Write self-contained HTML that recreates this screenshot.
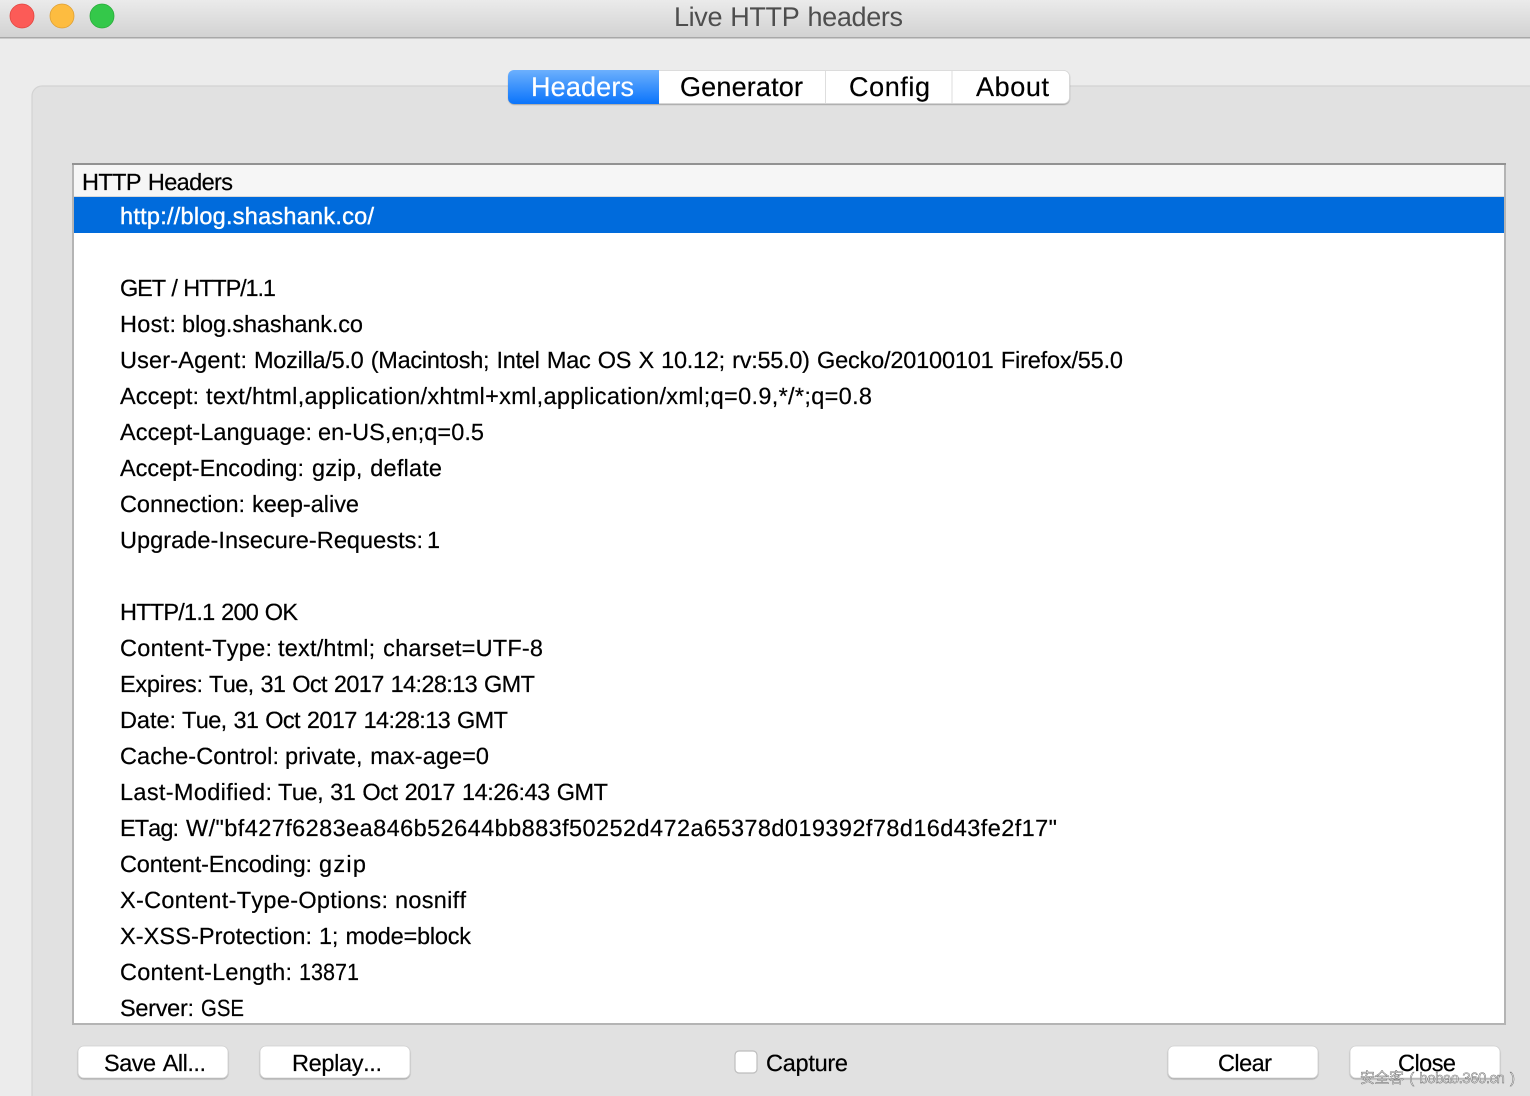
<!DOCTYPE html>
<html lang="en"><head><meta charset="utf-8"><title>Live HTTP headers</title>
<style>
html,body{margin:0;padding:0;width:1530px;height:1096px;overflow:hidden;background:#ececec}
svg{display:block}
text{font-family:"Liberation Sans","Noto Sans CJK SC",sans-serif;font-size:23.5px;fill:#000;stroke:#000;stroke-width:.2px;word-spacing:1px;font-kerning:none;text-rendering:geometricPrecision}
.tab{font-size:27px;word-spacing:0}
</style></head><body>
<svg width="1530" height="1096" viewBox="0 0 1530 1096" xmlns="http://www.w3.org/2000/svg">
<defs>
<linearGradient id="tb" x1="0" y1="0" x2="0" y2="1"><stop offset="0" stop-color="#ebebeb"/><stop offset="1" stop-color="#d2d2d2"/></linearGradient>
<linearGradient id="tab" x1="0" y1="0" x2="0" y2="1"><stop offset="0" stop-color="#6cb0fd"/><stop offset="1" stop-color="#0a74fb"/></linearGradient>
<filter id="sh" x="-5%" y="-20%" width="110%" height="150%"><feDropShadow dx="0" dy="1" stdDeviation="0.6" flood-color="#000" flood-opacity="0.3"/></filter>
</defs>
<rect width="1530" height="1096" fill="#ececec"/>
<rect width="1530" height="37" fill="url(#tb)"/>
<rect y="37" width="1530" height="1.5" fill="#a8a8a8"/>
<circle cx="22" cy="16" r="12" fill="#fc5b57" stroke="#e24640" stroke-width="0.8"/>
<circle cx="62" cy="16" r="12" fill="#fdbc40" stroke="#dfa034" stroke-width="0.8"/>
<circle cx="102" cy="16" r="12" fill="#34c84a" stroke="#2aac3a" stroke-width="0.8"/>
<text x="674" y="26" textLength="229" lengthAdjust="spacing" style="font-size:27px;fill:#4e4e4e;stroke:none">Live HTTP headers</text>

<path d="M32 1096V96a10 10 0 0 1 10-10H1530V1096Z" fill="#e1e1e1"/>
<path d="M32 1096V96a10 10 0 0 1 10-10H1530" fill="none" stroke="#d3d3d3" stroke-width="1.2"/>

<rect x="508.500" y="70.500" width="561" height="33" rx="6" fill="#fff" stroke="#d4d4d4" stroke-width=".8" filter="url(#sh)"/>
<path d="M514 70H659V104H514a6 6 0 0 1-6-6V76a6 6 0 0 1 6-6Z" fill="url(#tab)"/>
<rect x="825" y="71" width="1" height="32" fill="#dedede"/>
<rect x="951.500" y="71" width="1" height="32" fill="#dedede"/>
<text class="tab" x="531" y="96" textLength="103" lengthAdjust="spacing" style="fill:#fff;stroke:#fff">Headers</text>
<text class="tab" x="680" y="96" textLength="123" lengthAdjust="spacing">Generator</text>
<text class="tab" x="849" y="96" textLength="81" lengthAdjust="spacing">Config</text>
<text class="tab" x="976" y="96" textLength="73" lengthAdjust="spacing">About</text>

<rect x="72" y="163" width="1434" height="862" fill="#fff"/>
<rect x="72" y="163" width="1434" height="2" fill="#929292"/>
<rect x="72" y="165" width="2" height="860" fill="#b4b4b4"/>
<rect x="1504" y="165" width="2" height="860" fill="#b4b4b4"/>
<rect x="72" y="1023" width="1434" height="2" fill="#b4b4b4"/>
<rect x="74" y="165" width="1430" height="31" fill="#f6f6f6"/>
<rect x="74" y="196" width="1430" height="1" fill="#d8d8d8"/>
<rect x="74" y="197" width="1430" height="36" fill="#006bdc"/>

<text x="82" y="190" textLength="151" lengthAdjust="spacing">HTTP Headers</text>
<text x="120" y="224" textLength="254" lengthAdjust="spacing" style="fill:#fff;stroke:#fff;stroke-width:.4px">http://blog.shashank.co/</text>
<text x="120" y="296" textLength="156" lengthAdjust="spacing">GET / HTTP/1.1</text>
<text x="120" y="332" textLength="56" lengthAdjust="spacing">Host:</text><text x="182" y="332" textLength="181" lengthAdjust="spacing">blog.shashank.co</text>
<text x="120" y="368" textLength="127" lengthAdjust="spacing">User-Agent:</text><text x="254" y="368" textLength="556" lengthAdjust="spacing">Mozilla/5.0 (Macintosh; Intel Mac OS X 10.12; rv:55.0)</text><text x="817" y="368" textLength="306" lengthAdjust="spacing">Gecko/20100101 Firefox/55.0</text>
<text x="120" y="404" textLength="79" lengthAdjust="spacing">Accept:</text><text x="206" y="404" textLength="666" lengthAdjust="spacing">text/html,application/xhtml+xml,application/xml;q=0.9,*/*;q=0.8</text>
<text x="120" y="440" textLength="192" lengthAdjust="spacing">Accept-Language:</text><text x="318" y="440" textLength="166" lengthAdjust="spacing">en-US,en;q=0.5</text>
<text x="120" y="476" textLength="184" lengthAdjust="spacing">Accept-Encoding:</text><text x="312" y="476" textLength="130" lengthAdjust="spacing">gzip, deflate</text>
<text x="120" y="512" textLength="125" lengthAdjust="spacing">Connection:</text><text x="252" y="512" textLength="107" lengthAdjust="spacing">keep-alive</text>
<text x="120" y="548" textLength="303" lengthAdjust="spacing">Upgrade-Insecure-Requests:</text><text x="427" y="548">1</text>
<text x="120" y="620" textLength="178" lengthAdjust="spacing">HTTP/1.1 200 OK</text>
<text x="120" y="656" textLength="152" lengthAdjust="spacing">Content-Type:</text><text x="278" y="656" textLength="265" lengthAdjust="spacing">text/html; charset=UTF-8</text>
<text x="120" y="692" textLength="83" lengthAdjust="spacing">Expires:</text><text x="209" y="692" textLength="326" lengthAdjust="spacing">Tue, 31 Oct 2017 14:28:13 GMT</text>
<text x="120" y="728" textLength="56" lengthAdjust="spacing">Date:</text><text x="182" y="728" textLength="326" lengthAdjust="spacing">Tue, 31 Oct 2017 14:28:13 GMT</text>
<text x="120" y="764" textLength="159" lengthAdjust="spacing">Cache-Control:</text><text x="285" y="764" textLength="204" lengthAdjust="spacing">private, max-age=0</text>
<text x="120" y="800" textLength="152" lengthAdjust="spacing">Last-Modified:</text><text x="278" y="800" textLength="330" lengthAdjust="spacing">Tue, 31 Oct 2017 14:26:43 GMT</text>
<text x="120" y="836" textLength="59" lengthAdjust="spacing">ETag:</text><text x="186" y="836" textLength="871" lengthAdjust="spacing">W/"bf427f6283ea846b52644bb883f50252d472a65378d019392f78d16d43fe2f17"</text>
<text x="120" y="872" textLength="192" lengthAdjust="spacing">Content-Encoding:</text><text x="319" y="872" textLength="47" lengthAdjust="spacing">gzip</text>
<text x="120" y="908" textLength="268" lengthAdjust="spacing">X-Content-Type-Options:</text><text x="395" y="908" textLength="71" lengthAdjust="spacing">nosniff</text>
<text x="120" y="944" textLength="192" lengthAdjust="spacing">X-XSS-Protection:</text><text x="319" y="944" textLength="152" lengthAdjust="spacing">1; mode=block</text>
<text x="120" y="980" textLength="172" lengthAdjust="spacing">Content-Length:</text><text x="299" y="980" textLength="60" lengthAdjust="spacingAndGlyphs">13871</text>
<text x="120" y="1016" textLength="74" lengthAdjust="spacing">Server:</text><text x="201" y="1016" textLength="43" lengthAdjust="spacingAndGlyphs">GSE</text>

<rect x="78" y="1046" width="150" height="32" rx="6" fill="#fff" stroke="#d0d0d0" stroke-width=".8" filter="url(#sh)"/>
<rect x="260" y="1046" width="150" height="32" rx="6" fill="#fff" stroke="#d0d0d0" stroke-width=".8" filter="url(#sh)"/>
<rect x="1168" y="1046" width="150" height="32" rx="6" fill="#fff" stroke="#d0d0d0" stroke-width=".8" filter="url(#sh)"/>
<rect x="1350" y="1046" width="150" height="32" rx="6" fill="#fff" stroke="#d0d0d0" stroke-width=".8" filter="url(#sh)"/>
<text x="104" y="1071" textLength="102" lengthAdjust="spacing">Save All...</text>
<text x="292" y="1071" textLength="90" lengthAdjust="spacing">Replay...</text>
<text x="1218" y="1071" textLength="54" lengthAdjust="spacing">Clear</text>
<text x="1398" y="1071" textLength="58" lengthAdjust="spacing">Close</text>

<rect x="735" y="1051" width="22" height="22" rx="4" fill="#fff" stroke="#bdbdbd" stroke-width="1.2"/>
<text x="766" y="1071" textLength="82" lengthAdjust="spacing">Capture</text>

<text x="1360" y="1083" textLength="155" lengthAdjust="spacing" style="font-size:15px;fill:#e6e6e6;stroke:#5a5a5a;stroke-width:.4px;word-spacing:2px">安全客 ( bobao.360.cn )</text>
</svg>
</body></html>
